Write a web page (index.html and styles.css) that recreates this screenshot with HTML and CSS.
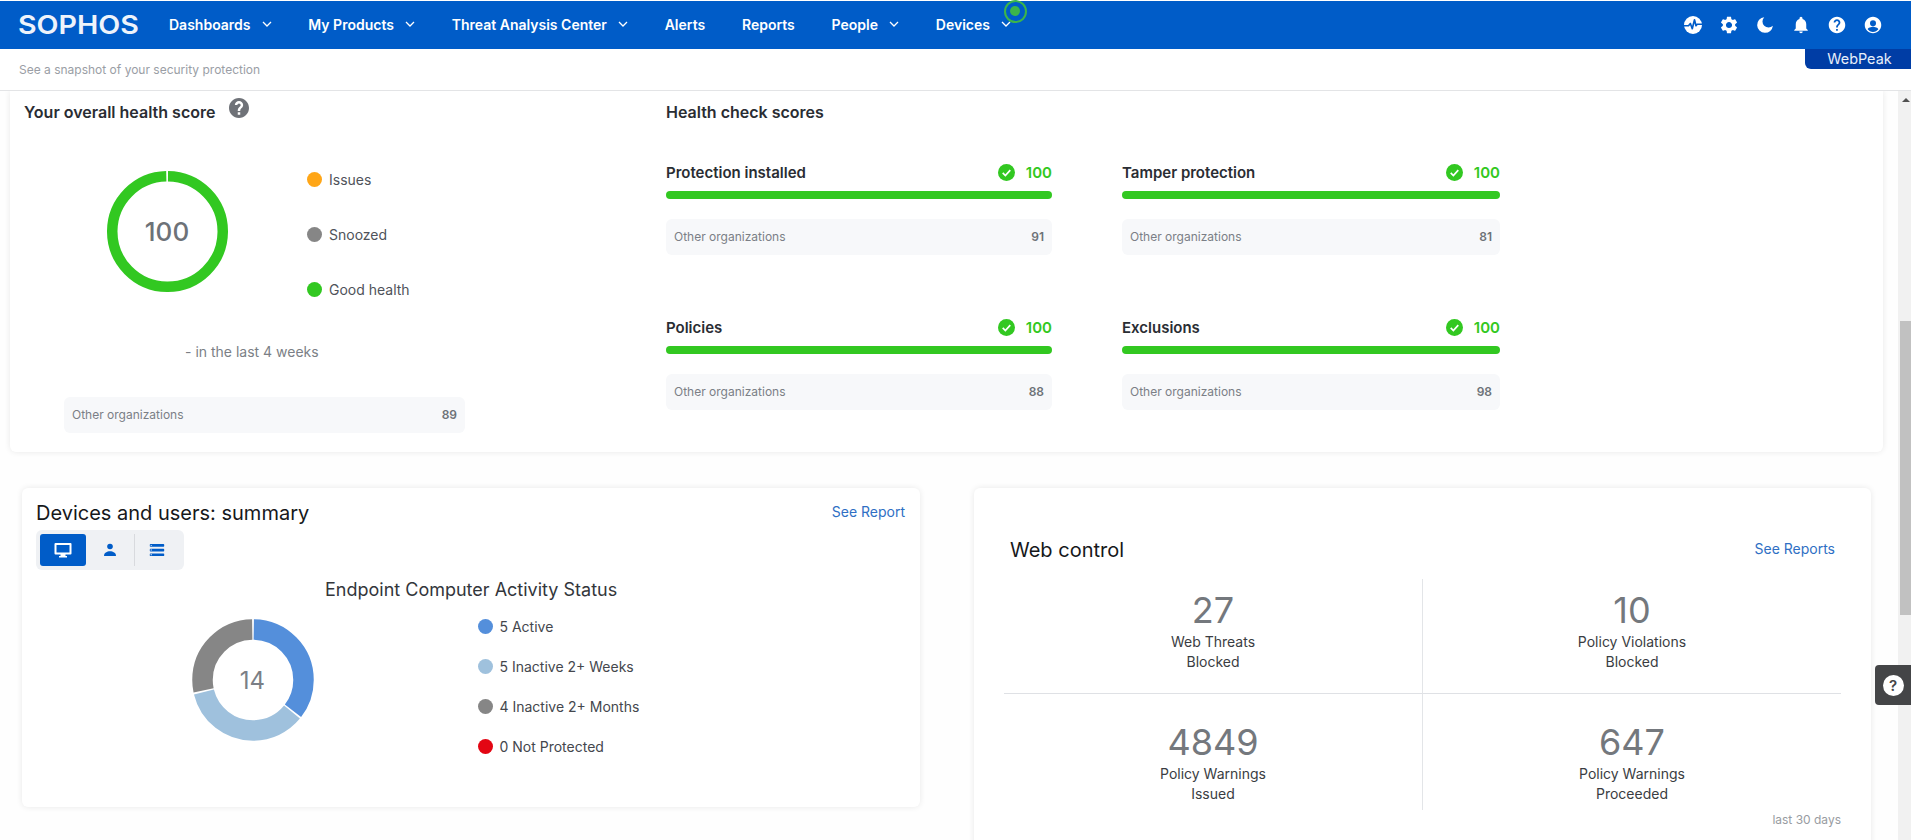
FILE: index.html
```html
<!DOCTYPE html>
<html lang="en">
<head>
<meta charset="utf-8">
<title>Sophos Central</title>
<link rel="stylesheet" href="styles.css">
</head>
<body>
<div class="app">
  <header class="topbar">
    <div class="logo"><span class="logo-text">SOPHOS</span></div>
    <nav class="nav">
      <a class="nav-item">Dashboards <svg class="chev" viewBox="0 0 10 6"><path d="M1 1l4 4 4-4"/></svg></a>
      <a class="nav-item">My Products <svg class="chev" viewBox="0 0 10 6"><path d="M1 1l4 4 4-4"/></svg></a>
      <a class="nav-item">Threat Analysis Center <svg class="chev" viewBox="0 0 10 6"><path d="M1 1l4 4 4-4"/></svg></a>
      <a class="nav-item">Alerts</a>
      <a class="nav-item">Reports</a>
      <a class="nav-item">People <svg class="chev" viewBox="0 0 10 6"><path d="M1 1l4 4 4-4"/></svg></a>
      <a class="nav-item nav-devices">Devices <svg class="chev" viewBox="0 0 10 6"><path d="M1 1l4 4 4-4"/></svg><span class="pulse"><span class="pulse-dot"></span></span></a>
    </nav>
    <div class="tools">
      <svg class="tool" viewBox="0 0 24 24"><circle cx="12" cy="12" r="12" fill="#fff"/><path d="M0 13h6l2.5-3 2.5 7 3-12 2 8 1.5-2H24" fill="none" stroke="#005cc8" stroke-width="2.2" stroke-linejoin="round"/></svg>
      <svg class="tool" viewBox="1.500 1.500 21 21"><path fill="#fff" d="M19.14 12.94c.04-.3.06-.61.06-.94 0-.32-.02-.64-.07-.94l2.03-1.58c.18-.14.23-.41.12-.61l-1.92-3.32c-.12-.22-.37-.29-.59-.22l-2.39.96c-.5-.38-1.03-.7-1.62-.94l-.36-2.54c-.04-.24-.24-.41-.48-.41h-3.84c-.24 0-.43.17-.47.41l-.36 2.54c-.59.24-1.13.57-1.62.94l-2.39-.96c-.22-.08-.47 0-.59.22L2.74 8.87c-.12.21-.08.47.12.61l2.03 1.58c-.05.3-.09.63-.09.94s.02.64.07.94l-2.03 1.58c-.18.14-.23.41-.12.61l1.92 3.32c.12.22.37.29.59.22l2.39-.96c.5.38 1.03.7 1.62.94l.36 2.54c.05.24.24.41.48.41h3.84c.24 0 .44-.17.47-.41l.36-2.54c.59-.24 1.13-.56 1.62-.94l2.39.96c.22.08.47 0 .59-.22l1.92-3.32c.12-.22.07-.47-.12-.61l-2.01-1.58zM12 15.6c-1.98 0-3.6-1.62-3.6-3.6s1.62-3.6 3.6-3.6 3.6 1.62 3.6 3.6-1.62 3.6-3.6 3.6z"/></svg>
      <svg class="tool" viewBox="0 0 24 24"><path fill="#fff" d="M11 1.5a10.5 10.5 0 1 0 11.5 11.5 8 8 0 0 1-11.5-11.5z"/></svg>
      <svg class="tool" viewBox="0 0 24 24"><path fill="#fff" d="M12 23c1.3 0 2.3-1 2.3-2.2H9.700c0 1.200 1 2.200 2.300 2.200zm7-6.500V11c0-3.400-1.800-6.200-5-7V3.200C14 2 13.100 1 12 1s-2 1-2 2.200V4c-3.200.8-5 3.600-5 7v5.500L3 18.600v1h18v-1l-2-2.100z"/></svg>
      <svg class="tool" viewBox="0 0 24 24"><path fill="#fff" d="M12 1C5.930 1 1 5.930 1 12s4.930 11 11 11 11-4.930 11-11S18.070 1 12 1zm1.100 18.700h-2.300v-2.300h2.300v2.300zm2.300-8.500l-1 1c-.8.800-1.300 1.500-1.300 3.200h-2.300v-.6c0-1.200.5-2.300 1.300-3.100l1.400-1.400c.4-.4.600-.9.600-1.500 0-1.200-1-2.200-2.100-2.200s-2.200 1-2.200 2.200H7.500c0-2.500 2-4.500 4.500-4.500s4.500 2 4.500 4.500c0 .9-.4 1.800-1.100 2.400z"/></svg>
      <svg class="tool" viewBox="0 0 24 24"><path fill="#fff" fill-rule="evenodd" d="M12 1C5.930 1 1 5.930 1 12s4.930 11 11 11 11-4.930 11-11S18.070 1 12 1zm0 4.500a4 4 0 1 1 0 8 4 4 0 0 1 0-8zm0 15.700c-2.900 0-5.500-1.400-7.100-3.500.1-2.200 4.800-3.500 7.100-3.500s7 1.300 7.100 3.500c-1.600 2.100-4.200 3.500-7.100 3.500z"/></svg>
    </div>
  </header>
  <div class="webpeak">WebPeak</div>

  <div class="subhead">See a snapshot of your security protection</div>

  <div class="body">
    <main class="content">
      <section class="card health">
        <div class="health-left">
          <div class="health-title-row">
            <h2 class="health-title">Your overall health score</h2>
            <svg class="help-mark" viewBox="0 0 24 24"><path fill="#6f7278" d="M12 0C5.370 0 0 5.370 0 12s5.370 12 12 12 12-5.370 12-12S18.630 0 12 0zm1.500 20h-3v-3h3v3zm2.400-8.600l-1 1c-.9.900-1.400 1.500-1.400 3.100h-3v-.7c0-1.300.5-2.500 1.400-3.300l1.500-1.500c.4-.4.600-.9.600-1.500 0-1.100-.9-2-2-2s-2 .9-2 2h-3c0-2.800 2.200-5 5-5s5 2.200 5 5c0 1.100-.4 2.100-1.100 2.900z"/></svg>
          </div>
          <div class="score-row">
            <div class="score-donut">
              <svg class="donut-svg" viewBox="0 0 121 121">
                <circle cx="60.500" cy="60.500" r="55.250" fill="none" stroke="#32c821" stroke-width="10.500" pathLength="100" stroke-dasharray="99.500 0.500" transform="rotate(-89.500 60.500 60.500)"/>
              </svg>
              <span class="score-value">100</span>
            </div>
            <ul class="score-legend">
              <li class="score-key"><i class="dot dot-orange"></i>Issues</li>
              <li class="score-key"><i class="dot dot-gray"></i>Snoozed</li>
              <li class="score-key"><i class="dot dot-green"></i>Good health</li>
            </ul>
          </div>
          <p class="period">- in the last 4 weeks</p>
          <div class="other other-wide"><span>Other organizations</span><b>89</b></div>
        </div>
        <div class="health-right">
          <h2 class="checks-title">Health check scores</h2>
          <div class="checks">
            <div class="check">
              <div class="check-head"><span class="check-name">Protection installed</span>
                <span class="check-score"><svg class="tick" viewBox="0 0 18 18"><circle cx="9" cy="9" r="9" fill="#32c821"/><path d="M5 9.500l2.800 2.800L13 6.500" fill="none" stroke="#fff" stroke-width="1.800"/></svg>100</span></div>
              <div class="bar"></div>
              <div class="other"><span>Other organizations</span><b>91</b></div>
            </div>
            <div class="check">
              <div class="check-head"><span class="check-name">Tamper protection</span>
                <span class="check-score"><svg class="tick" viewBox="0 0 18 18"><circle cx="9" cy="9" r="9" fill="#32c821"/><path d="M5 9.500l2.800 2.800L13 6.500" fill="none" stroke="#fff" stroke-width="1.800"/></svg>100</span></div>
              <div class="bar"></div>
              <div class="other"><span>Other organizations</span><b>81</b></div>
            </div>
            <div class="check">
              <div class="check-head"><span class="check-name">Policies</span>
                <span class="check-score"><svg class="tick" viewBox="0 0 18 18"><circle cx="9" cy="9" r="9" fill="#32c821"/><path d="M5 9.500l2.800 2.800L13 6.500" fill="none" stroke="#fff" stroke-width="1.800"/></svg>100</span></div>
              <div class="bar"></div>
              <div class="other"><span>Other organizations</span><b>88</b></div>
            </div>
            <div class="check">
              <div class="check-head"><span class="check-name">Exclusions</span>
                <span class="check-score"><svg class="tick" viewBox="0 0 18 18"><circle cx="9" cy="9" r="9" fill="#32c821"/><path d="M5 9.500l2.800 2.800L13 6.500" fill="none" stroke="#fff" stroke-width="1.800"/></svg>100</span></div>
              <div class="bar"></div>
              <div class="other"><span>Other organizations</span><b>98</b></div>
            </div>
          </div>
        </div>
      </section>

      <div class="lower">
        <section class="card devices">
          <div class="devices-head">
            <h2 class="card-title">Devices and users: summary</h2>
            <a class="link">See Report</a>
          </div>
          <div class="segmented">
            <span class="seg seg-active"><svg class="seg-icon" viewBox="0 0 18 18"><path fill="#fff" fill-rule="evenodd" d="M1.500 2h15a1 1 0 0 1 1 1v9.500a1 1 0 0 1-1 1h-5V15H13v1.500H5V15h1.500v-1.500h-5a1 1 0 0 1-1-1V3a1 1 0 0 1 1-1zm1 2v7.500h13V4z"/></svg></span>
            <span class="seg seg-user"><svg class="seg-icon" viewBox="0 0 18 18"><circle cx="9" cy="5.500" r="2.800" fill="#005cc8"/><path fill="#005cc8" d="M3 15c0-3.200 3-4.700 6-4.700s6 1.500 6 4.700z"/></svg></span>
            <span class="seg-sep"></span>
            <span class="seg seg-list"><svg class="seg-icon" viewBox="0 0 18 18"><path fill="#005cc8" d="M2.500 3h13a.7.7 0 0 1 .7.7v1.300a.7.7 0 0 1-.7.7h-13a.7.7 0 0 1-.7-.7V3.700a.7.7 0 0 1 .7-.7zm0 4.700h13a.7.7 0 0 1 .7.7v1.300a.7.7 0 0 1-.7.7h-13a.7.7 0 0 1-.7-.7V8.400a.7.7 0 0 1 .7-.7zm0 4.700h13a.7.7 0 0 1 .7.7v1.300a.7.7 0 0 1-.7.7h-13a.7.7 0 0 1-.7-.7v-1.300a.7.7 0 0 1 .7-.7z"/><path fill="#eef0f3" d="M2.600 3.900h1.300v.9H2.600zm0 4.700h1.300v.9H2.600zm0 4.700h1.300v.9H2.600z"/></svg></span>
          </div>
          <h3 class="chart-title">Endpoint Computer Activity Status</h3>
          <div class="chart-row">
            <div class="activity-donut">
              <svg class="donut-svg" viewBox="0 0 122 122">
                <g fill="none" stroke-width="20.500" transform="rotate(-90 61 61)">
                  <circle cx="61" cy="61" r="50.500" stroke="#548fdb" pathLength="14" stroke-dasharray="4.930 9.070" stroke-dashoffset="-0.035"/>
                  <circle cx="61" cy="61" r="50.500" stroke="#9fc1dd" pathLength="14" stroke-dasharray="4.930 9.070" stroke-dashoffset="-5.035"/>
                  <circle cx="61" cy="61" r="50.500" stroke="#868686" pathLength="14" stroke-dasharray="3.930 10.070" stroke-dashoffset="-10.035"/>
                </g>
              </svg>
              <span class="activity-value">14</span>
            </div>
            <ul class="activity-legend">
              <li class="activity-key"><i class="dot dot-blue"></i>5 Active</li>
              <li class="activity-key"><i class="dot dot-light"></i>5 Inactive 2+ Weeks</li>
              <li class="activity-key"><i class="dot dot-gray"></i>4 Inactive 2+ Months</li>
              <li class="activity-key"><i class="dot dot-red"></i>0 Not Protected</li>
            </ul>
          </div>
        </section>

        <section class="card web">
          <div class="web-head">
            <h2 class="card-title">Web control</h2>
            <a class="link">See Reports</a>
          </div>
          <div class="web-grid">
            <div class="stat stat-a"><strong class="stat-num">27</strong><span class="stat-label">Web Threats<br>Blocked</span></div>
            <div class="stat stat-b"><strong class="stat-num">10</strong><span class="stat-label">Policy Violations<br>Blocked</span></div>
            <div class="stat stat-c"><strong class="stat-num">4849</strong><span class="stat-label">Policy Warnings<br>Issued</span></div>
            <div class="stat stat-d"><strong class="stat-num">647</strong><span class="stat-label">Policy Warnings<br>Proceeded</span></div>
          </div>
          <p class="web-note">last 30 days</p>
        </section>
      </div>
    </main>
    <aside class="scrollbar"><span class="scroll-arrow"></span><span class="scroll-thumb"></span></aside>
  </div>

  <button class="help-float"><span class="help-float-mark">?</span></button>
</div>
</body>
</html>
```
FILE: styles.css
```css
* { box-sizing: border-box; }
html, body { margin: 0; padding: 0; height: 100%; overflow: hidden; background: #fff; }
body { font-family: Inter, "Noto Sans", "Liberation Sans", sans-serif; color: #2a2d33; }
h2, h3, p, ul { margin: 0; padding: 0; }
ul { list-style: none; }

.app { position: relative; display: flex; flex-direction: column; width: 1911px; height: 840px; overflow: hidden; padding-top: 1px; }

/* Top bar */
.topbar { display: flex; align-items: center; height: 48px; background: #005cc8; flex: none; }
.logo { width: 169px; padding-left: 18px; flex: none; }
.logo-text { display: inline-block; color: #eef3fb; font-size: 26px; font-weight: 600; line-height: 26px; letter-spacing: 0; transform: scaleX(1.1); transform-origin: left center; }
.nav { display: flex; align-items: center; gap: 36.8px; margin-top: -2px; }
.nav-item { position: relative; display: flex; align-items: center; gap: 11px; color: #fff; font-size: 14px; font-weight: 600; white-space: nowrap; }
.chev { width: 10px; height: 6px; fill: none; stroke: #fff; stroke-width: 1.300; }
.pulse { position: absolute; left: 68px; top: -16px; width: 23px; height: 23px; border: 2px solid #3cb54a; border-radius: 50%; display: flex; align-items: center; justify-content: center; }
.pulse-dot { width: 10px; height: 10px; border-radius: 50%; background: #3cb54a; }
.tools { margin-left: auto; display: flex; gap: 18px; padding-right: 29px; }
.tool { width: 18px; height: 18px; display: block; }
.webpeak { position: absolute; top: 49px; right: 0; width: 106px; height: 20px; padding-left: 3px; background: #003da5; border-bottom-left-radius: 6px; color: #e8effa; font-size: 14.4px; line-height: 20px; text-align: center; }

.subhead { flex: none; height: 42px; padding: 13px 0 0 19px; font-size: 12px; line-height: 16px; color: #9a9ea5; border-bottom: 1px solid #e3e4e6; }

/* Scrolling body */
.body { flex: 1; display: flex; min-height: 0; }
.content { flex: 1; min-width: 0; overflow: hidden; background: #fefefe; }
.scrollbar { flex: none; width: 13px; display: flex; flex-direction: column; background: #f1f1f1; }
.scroll-arrow { width: 0; height: 0; margin: 7px 0 0 4px; border: 4px solid transparent; border-top: 0; border-bottom: 4px solid #505050; }
.scroll-thumb { width: 11px; height: 294px; margin: 219px 0 0 2px; background: #c1c1c1; }

.card { background: #fff; border-radius: 6px; box-shadow: 0 0 6px rgba(0, 0, 0, .09); }

/* Health card */
.health { display: flex; width: 1873px; height: 361px; margin-left: 10px; border-top-left-radius: 0; border-top-right-radius: 0; }
.health-left { width: 656px; flex: none; }
.health-title-row { display: flex; padding: 11px 0 0 14px; gap: 14px; }
.health-title { font-size: 16px; line-height: 20px; font-weight: 600; color: #2a2d33; }
.help-mark { width: 20px; height: 20px; margin-top: -4px; }
.score-row { display: flex; margin-top: 49px; padding-left: 96.5px; }
.score-donut { display: grid; place-items: center; width: 121px; height: 121px; flex: none; }
.donut-svg { grid-area: 1 / 1; display: block; width: 100%; height: 100%; }
.score-value { grid-area: 1 / 1; font-size: 26px; font-weight: 500; color: #6d7278; }
.score-legend { margin: -2px 0 0 79.5px; display: flex; flex-direction: column; gap: 35px; }
.score-key { display: flex; align-items: center; gap: 7px; height: 20px; font-size: 14px; color: #4f535a; }
.dot { display: block; width: 15px; height: 15px; border-radius: 50%; flex: none; }
.dot-orange { background: #ffa617; }
.dot-gray { background: #868686; }
.dot-green { background: #32c821; }
.dot-blue { background: #548fdb; }
.dot-light { background: #9fc1dd; }
.dot-red { background: #e30613; }
.period { margin: 43px 0 0 175px; font-size: 14px; line-height: 20px; color: #7b7f86; }
.other { display: flex; align-items: center; justify-content: space-between; height: 36px; padding: 0 8px 1px; background: #f7f8fa; border-radius: 6px; font-size: 12px; color: #7b7f86; }
.other b { font-weight: 600; color: #6d7278; }
.other-wide { width: 401px; margin: 35px 0 0 54px; }

.health-right { flex: 1; padding-top: 11px; }
.checks-title { font-size: 16px; line-height: 20px; font-weight: 600; color: #2a2d33; }
.checks { display: grid; grid-template-columns: 386px 378px; column-gap: 70px; row-gap: 63px; margin-top: 41px; }
.check-head { display: flex; align-items: center; justify-content: space-between; height: 20px; margin-top: -1px; }
.check-name { font-size: 15px; font-weight: 600; color: #2a2d33; }
.check-score { display: flex; align-items: center; gap: 11px; font-size: 15px; font-weight: 600; color: #32c821; }
.tick { width: 17px; height: 17px; display: block; }
.bar { height: 8px; margin: 9px 0 20px; background: #32c821; border-radius: 4px; }

/* Lower cards */
.lower { display: flex; align-items: flex-start; gap: 54px; margin: 36px 0 0 22px; }
.devices { width: 898px; height: 319px; padding: 13px 15px 0 14px; }
.devices-head { display: flex; justify-content: space-between; align-items: flex-start; }
.devices-head .link { margin-top: 1px; }
.card-title { font-size: 20px; line-height: 24px; font-weight: 400; color: #16181b; }
.link { font-size: 14px; line-height: 20px; color: #2f6fc4; }
.segmented { display: flex; align-items: center; width: 148px; height: 40px; margin-top: 5px; padding: 4px; background: #eff1f4; border-radius: 6px; }
.seg { display: flex; align-items: center; justify-content: center; width: 46px; height: 32px; border-radius: 3px; }
.seg-active { background: #005cc8; }
.seg-user { width: 48px; }
.seg-list { width: 44px; }
.seg-sep { width: 1px; height: 32px; background: #d8dade; }
.seg-icon { width: 18px; height: 18px; }
.chart-title { margin: 8px 0 0 289px; font-size: 18px; line-height: 24px; font-weight: 400; color: #33363b; }
.chart-row { display: flex; margin-top: 17px; padding-left: 155.5px; }
.activity-donut { display: grid; place-items: center; width: 122px; height: 122px; flex: none; }
.activity-value { grid-area: 1 / 1; font-size: 24px; color: #7b7f86; }
.activity-legend { margin: -3px 0 0 164px; display: flex; flex-direction: column; gap: 20px; }
.activity-key { display: flex; align-items: center; gap: 7px; height: 20px; font-size: 14px; color: #44474d; }

.web { width: 897px; height: 430px; padding: 50px 30px 0 36px; }
.web-head { display: flex; justify-content: space-between; align-items: center; padding-right: 6px; height: 24px; }
.web-head .link { margin-top: -3px; }
.web-grid { display: grid; grid-template-columns: 419px 1fr; margin: 17px 0 0 -6px; width: 837px; }
.stat { display: flex; flex-direction: column; align-items: center; height: 115px; }
.stat-a, .stat-c { border-right: 1px solid #e3e5e8; }
.stat-a, .stat-b { border-bottom: 1px solid #dfe1e5; padding-top: 9px; }
.stat-c, .stat-d { padding-top: 26px; height: 116px; }
.stat-num { font-size: 36px; line-height: 44px; font-weight: 400; color: #74787d; }
.stat-label { font-size: 14px; line-height: 20px; text-align: center; color: #3a3d42; }
.web-note { text-align: right; font-size: 12px; line-height: 20px; color: #989ca2; }

.help-float { position: absolute; right: 0; top: 665px; width: 36px; height: 40px; padding: 0; border: 0; background: #444547; border-radius: 4px 0 0 4px; display: flex; align-items: center; justify-content: center; }
.help-float-mark { width: 21px; height: 21px; border-radius: 50%; background: #fff; color: #444547; font-family: Inter, sans-serif; font-size: 15px; font-weight: 600; line-height: 21px; text-align: center; }
```
